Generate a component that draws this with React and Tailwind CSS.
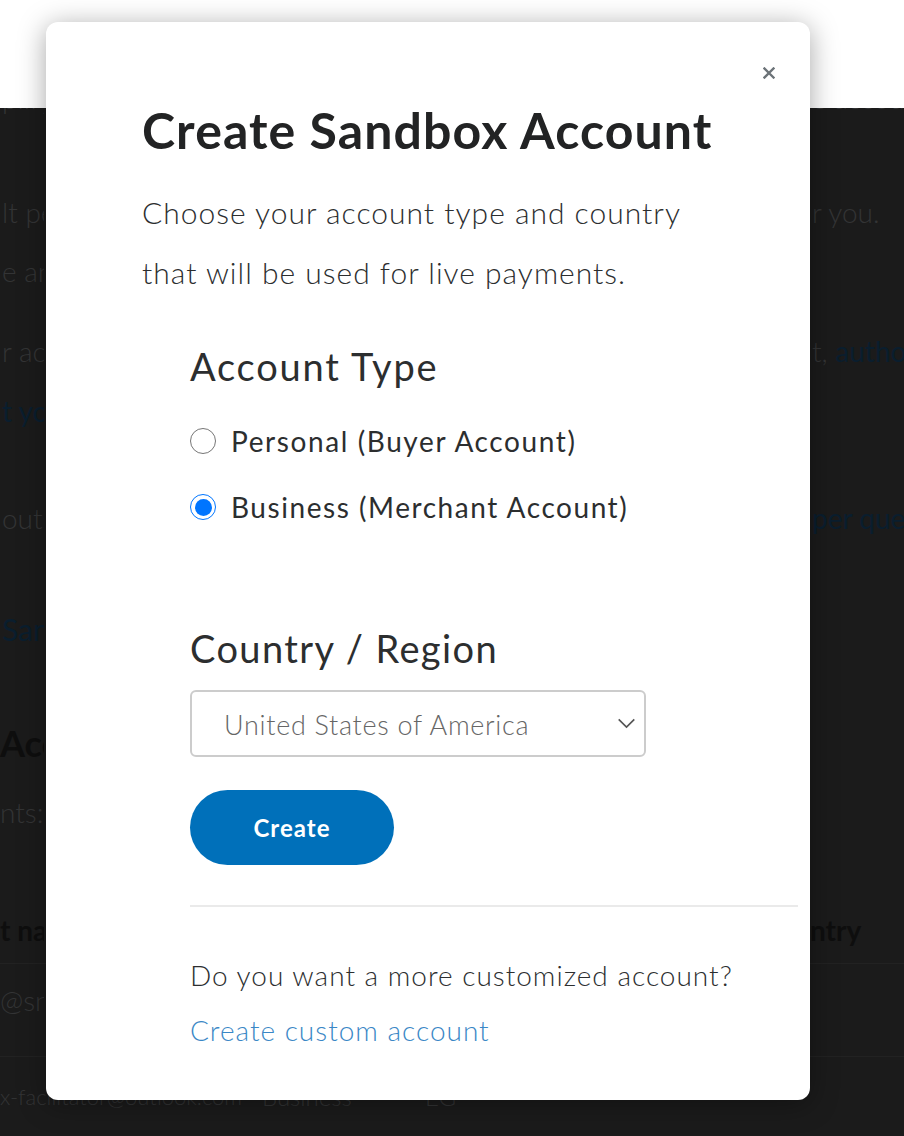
import { useState } from 'react'

const bgRows = [
  { mt: 'mt-[-40px]', left: 'plify testing', right: 'e accounts' },
  { mt: 'mt-[54px]', left: 'lt personal', right: 'r you.' },
  { mt: 'mt-[0px]', left: 'e and manage' },
  { mt: 'mt-[20px]', left: 'r account', right: 't, ', rightLink: 'authorize' },
  { mt: 'mt-[0px]', left: 't your', leftLink: true },
  { mt: 'mt-[48px]', left: 'outside', rightLink: 'per questions' },
  { mt: 'mt-[52px]', left: 'Sandbox', leftLink: true, big: true },
]

function BgLine({ row }) {
  return (
    <div className={`${row.mt} h-[60px] flex items-center whitespace-nowrap text-[28px] font-light`}>
      <div className="w-[812px] shrink-0">
        <div className={`w-[44px] overflow-hidden pl-[2px] ${row.leftLink ? 'text-[#0a1e2e] font-normal' : 'text-[#333435]'} ${row.big ? 'text-[30px]' : ''}`}>
          {row.left}
        </div>
      </div>
      <div className="text-[#333435]">
        {row.right}
        {row.rightLink && <span className="text-[#0a1e2e] font-normal">{row.rightLink}</span>}
      </div>
    </div>
  )
}

function Radio({ checked }) {
  return checked ? (
    <div className="w-[26px] h-[26px] rounded-full border-[1.5px] border-[#0075ff] bg-white flex items-center justify-center shrink-0">
      <div className="w-[17px] h-[17px] rounded-full bg-[#0075ff]" />
    </div>
  ) : (
    <div className="w-[26px] h-[26px] rounded-full border-[1.5px] border-[#767676] bg-white shrink-0" />
  )
}

export default function App() {
  const [accountType, setAccountType] = useState('business')

  return (
    <div className="relative w-[904px] h-[1136px] overflow-hidden bg-[#1b1b1b] font-['Lato','Liberation_Sans',sans-serif]">
      {/* page header, not dimmed */}
      <div className="h-[108px] bg-white" />

      {/* dimmed page behind the dialog */}
      <div className="h-[1028px] overflow-hidden flex flex-col">
        {bgRows.map((r, i) => <BgLine key={i} row={r} />)}

        <div className="mt-[53px] h-[60px] flex items-center whitespace-nowrap text-[36px] font-bold text-[#0e0e0e]">
          <div className="w-[44px] overflow-hidden">Accounts</div>
        </div>
        <div className="mt-[10px] h-[60px] flex items-center whitespace-nowrap text-[28px] font-light text-[#333435]">
          <div className="w-[44px] overflow-hidden">nts: 2</div>
        </div>

        <div className="mt-[58px] h-[60px] flex items-center whitespace-nowrap text-[28px] font-bold text-[#0e0e0e]">
          <div className="w-[810px] shrink-0">
            <div className="w-[44px] overflow-hidden">t name</div>
          </div>
          <div>ntry</div>
        </div>
        <div className="mt-[3px] h-[94px] pb-[20px] border-t border-[#222222] flex items-center whitespace-nowrap text-[28px] font-light text-[#333435]">
          <div className="w-[44px] overflow-hidden">@snapbox.com</div>
        </div>
        <div className="h-[80px] border-t border-[#222222] flex items-center whitespace-nowrap text-[24px] font-light text-[#333435]">
          <div className="w-[262px] shrink-0 overflow-hidden text-[22px]">x-facilitator@outlook.com</div>
          <div className="w-[163px] shrink-0">Business</div>
          <div>EG</div>
        </div>
      </div>

      {/* dialog */}
      <div className="absolute left-[46px] top-[22px] w-[764px] h-[1078px] bg-white rounded-[12px] shadow-[0_4px_28px_rgba(0,0,0,0.35)] pt-[80px] pl-[96px] pr-[12px] text-[#2c2e2f]">
        <button className="absolute top-[45px] right-[35px] w-3 h-3 text-[#6c7378]" aria-label="Close">
          <svg viewBox="0 0 12 12" className="w-3 h-3" fill="none" stroke="currentColor" strokeWidth="2.4" strokeLinecap="square">
            <path d="M1.5 1.5L10.5 10.5M10.5 1.5L1.5 10.5" />
          </svg>
        </button>

        <h2 className="text-[50px] leading-[56px] font-bold tracking-[1.1px] text-[#222324] whitespace-nowrap">Create Sandbox Account</h2>
        <p className="mt-[24px] text-[30px] leading-[60px] font-light tracking-[1px] whitespace-nowrap">
          Choose your account type and country<br />that will be used for live payments.
        </p>

        <div className="pl-[48px]">
          <h3 className="mt-[42px] text-[38px] leading-[44px] font-normal tracking-[1.8px]">Account Type</h3>

          <label className="mt-[31px] h-[44px] flex items-center gap-[15px] text-[28px] tracking-[1.6px] cursor-pointer" onClick={() => setAccountType('personal')}>
            <Radio checked={accountType === 'personal'} />
            <span>Personal (Buyer Account)</span>
          </label>
          <label className="mt-[22px] h-[44px] flex items-center gap-[15px] text-[28px] tracking-[1.55px] cursor-pointer" onClick={() => setAccountType('business')}>
            <Radio checked={accountType === 'business'} />
            <span>Business (Merchant Account)</span>
          </label>

          <h3 className="mt-[95px] text-[38px] leading-[48px] font-normal tracking-[1.4px]">Country / Region</h3>

          <div className="mt-[18px] w-[456px] h-[67px] border-2 border-[#cccccc] rounded-[6px] flex items-center justify-between pl-[32px] pr-[8px]">
            <span className="text-[27px] font-light tracking-[0.7px] text-[#666666] mt-[4px]">United States of America</span>
            <svg viewBox="0 0 20 12" className="w-[19px] h-[11px]" fill="none" stroke="#555555" strokeWidth="1.8">
              <path d="M1.5 1.5L10 10L18.5 1.5" />
            </svg>
          </div>

          <button className="mt-[33px] w-[204px] h-[75px] rounded-full bg-[#0070ba] text-white text-[24px] font-bold tracking-[1px]">
            Create
          </button>

          <div className="mt-[40px] h-[2px] bg-[#eaeaea]" />

          <p className="mt-[48px] text-[28px] leading-[40px] font-light tracking-[1px] whitespace-nowrap">Do you want a more customized account?</p>
          <a className="mt-[15px] block text-[28px] leading-[40px] font-light tracking-[1px] text-[#3a87c6]">Create custom account</a>
        </div>
      </div>
    </div>
  )
}
